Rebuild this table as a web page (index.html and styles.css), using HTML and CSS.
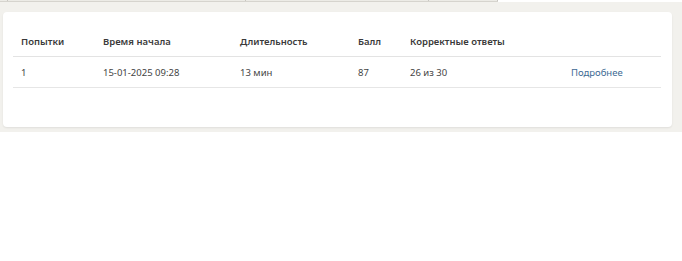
FILE: index.html
```html
<!DOCTYPE html>
<html lang="ru">
<head>
<meta charset="utf-8">
<link rel="stylesheet" href="styles.css">
</head>
<body>
<div class="topstrip">
  <div class="tabs">
    <span class="tab t1"></span><span class="tab t2"></span><span class="tab t3"></span>
  </div>
</div>
<section class="panel">
  <div class="card">
    <table class="attempts">
      <colgroup>
        <col class="c1"><col class="c2"><col class="c3"><col class="c4"><col class="c5"><col class="c6">
      </colgroup>
      <thead>
        <tr><th>Попытки</th><th>Время начала</th><th>Длительность</th><th>Балл</th><th>Корректные ответы</th><th></th></tr>
      </thead>
      <tbody>
        <tr><td>1</td><td>15-01-2025 09:28</td><td>13 мин</td><td>87</td><td>26 из 30</td><td><a class="more" href="#">Подробнее</a></td></tr>
      </tbody>
    </table>
  </div>
</section>
</body>
</html>
```
FILE: styles.css
```css
html, body {
  margin: 0;
  padding: 0;
  background: #ffffff;
  font-family: "Noto Sans", "Open Sans", sans-serif;
  color: #333333;
}
.topstrip {
  height: 2px;
  background: #ffffff;
}
.tabs {
  display: flex;
  width: 498px;
  height: 1px;
  background: #ecebe6;
  border-bottom: 1px solid #d6d4ce;
}
.tab {
  display: block;
  height: 1px;
  border-left: 1px solid #c9c7c1;
}
.t1 { margin-left: 7px; width: 237px; }
.t2 { width: 182px; }
.t3 { width: 68px; border-right: 1px solid #c9c7c1; }
.panel {
  background: #f2f1ed;
  height: 130px;
  box-sizing: border-box;
  padding: 10px 10px 5px 3px;
}
.card {
  background: #ffffff;
  border-radius: 4px;
  box-shadow: 0 1px 2px rgba(0, 0, 0, 0.08);
  height: 115px;
  box-sizing: border-box;
  padding: 14px 11px 0 10px;
}
.attempts {
  width: 648px;
  border-collapse: collapse;
  table-layout: fixed;
  font-size: 9.5px;
}
.c1 { width: 82px; }
.c2 { width: 137px; }
.c3 { width: 118px; }
.c4 { width: 52px; }
.c5 { width: 161px; }
.c6 { width: 98px; }
.attempts th {
  text-align: left;
  font-weight: 600;
  color: #3a3a3a;
  padding: 0 8px;
  height: 30px;
  border-bottom: 1px solid #e3e3e3;
  white-space: nowrap;
}
.attempts td {
  padding: 0 8px;
  height: 30px;
  border-bottom: 1px solid #e6e6e6;
  color: #444444;
  white-space: nowrap;
}
.more {
  color: #3d6a94;
  text-decoration: none;
}
```
